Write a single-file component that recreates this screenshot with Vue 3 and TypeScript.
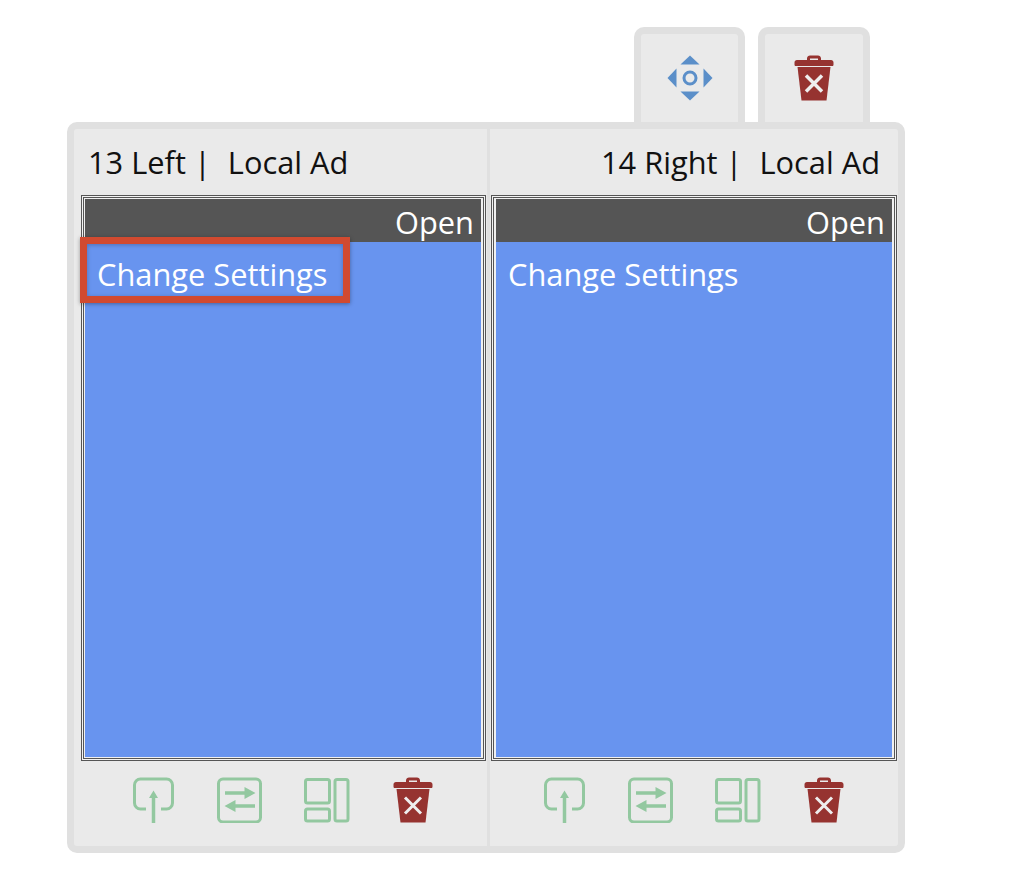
<script setup lang="ts">
interface Column {
  id: string
  label: string
  align: string
}
const columns: Column[] = [
  { id: 'left', label: '13 Left', align: 'left' },
  { id: 'right', label: '14 Right', align: 'right' },
]
</script>

<template>
  <div class="page">
    <div class="tabs">
      <button class="tab" type="button" aria-label="Move">
        <svg width="46" height="46" viewBox="0 0 46 46">
          <g fill="#5b8fc9">
            <path d="M23 .5 32.500 9.500h-19z" />
            <path d="M23 45.500 13.500 36.500h19z" />
            <path d="M.5 23 9.500 13.500v19z" />
            <path d="M45.500 23 36.500 13.500v19z" />
          </g>
          <circle cx="23" cy="23" r="6" fill="none" stroke="#5b8fc9" stroke-width="3" />
        </svg>
      </button>
      <button class="tab wide" type="button" aria-label="Delete">
        <svg width="40" height="46" viewBox="0 0 40 46">
          <path fill="#963330" d="M13 5V3.500C13 1.500 14.500.5 16 .5h8c1.500 0 3 1 3 3V5h10c1.500 0 2.500 1 2.500 2.500v2c0 1-.5 1.500-1.500 1.500H2c-1 0-1.500-.5-1.500-1.500v-2C.5 6 1.500 5 3 5zm3 0h8V3.500h-8z" />
          <path fill="#963330" d="M3.500 12h33L32.500 45.500h-25z" />
          <path d="m12 20.500 16 16m0-16-16 16" stroke="#eee" stroke-width="3.500" fill="none" />
        </svg>
      </button>
    </div>
    <div class="panel">
      <section v-for="col in columns" :key="col.id" class="col" :class="col.id">
        <header class="col-head" :class="col.align">
          <span>{{ col.label }} |</span>
          <span class="ad">Local Ad</span>
        </header>
        <div class="frame">
          <div class="frame-inner">
            <div class="content">
              <div class="open">Open</div>
              <div class="settings">Change Settings</div>
            </div>
          </div>
        </div>
        <footer class="actions">
          <svg width="42" height="46" viewBox="3 0 42 46" class="green">
            <path d="M16 32H10.500a6 6 0 0 1-6-6V8a6 6 0 0 1 6-6h26a6 6 0 0 1 6 6v18a6 6 0 0 1-6 6H31" />
            <path d="M23.500 19V46" stroke-width="3.500" />
            <path d="M23.500 13.500 28 21h-9z" class="fill" />
          </svg>
          <svg width="45" height="46" viewBox="0 0 45 46" class="green">
            <rect x="1.500" y="2" width="42" height="43" rx="4.500" />
            <path d="M8 16H30M38 29H16" stroke-width="3.500" />
            <path d="M38.500 16 27.500 10v12zM7.500 29 18.500 23v12z" class="fill" />
          </svg>
          <svg width="47" height="46" viewBox="0 0 47 46" class="green">
            <rect x="1.500" y="2.500" width="24" height="23.500" rx="2" />
            <rect x="1.500" y="32" width="24" height="12" rx="2" />
            <rect x="31" y="2.500" width="13" height="41.500" rx="2" />
          </svg>
          <svg width="40" height="46" viewBox="0 0 40 46">
            <path fill="#963330" d="M13 5V3.500C13 1.500 14.500.5 16 .5h8c1.500 0 3 1 3 3V5h10c1.500 0 2.500 1 2.500 2.500v2c0 1-.5 1.500-1.500 1.500H2c-1 0-1.500-.5-1.500-1.500v-2C.5 6 1.500 5 3 5zm3 0h8V3.500h-8z" />
            <path fill="#963330" d="M3.500 12h33L32.500 45.500h-25z" />
            <path d="m12 20.500 16 16m0-16-16 16" stroke="#eee" stroke-width="3" fill="none" />
          </svg>
        </footer>
      </section>
      <div class="highlight"></div>
    </div>
  </div>
</template>

<style>
html,
body {
  background: #fff;
}
</style>

<style scoped>
.page {
  width: 1014px;
  height: 888px;
  box-sizing: border-box;
  padding: 27px 0 0 67px;
  font-family: "Open Sans", "Liberation Sans", sans-serif;
  font-size: 30.8px;
  overflow: hidden;
}
.tabs {
  width: 838px;
  box-sizing: border-box;
  display: flex;
  justify-content: flex-end;
  gap: 13px;
  padding-right: 35px;
}
.tab {
  width: 111px;
  height: 95px;
  box-sizing: border-box;
  display: flex;
  align-items: center;
  justify-content: center;
  padding: 0;
  background: #eaeaea;
  border: 7px solid #e0e0e0;
  border-bottom: 0;
  border-radius: 10px 10px 0 0;
}
.tab.wide {
  width: 112px;
}
.panel {
  position: relative;
  width: 838px;
  height: 731px;
  box-sizing: border-box;
  display: flex;
  background: #eaeaea;
  border: 7px solid #e0e0e0;
  border-radius: 10px;
}
.col {
  display: flex;
  flex-direction: column;
  box-sizing: border-box;
}
.col.left {
  width: 413px;
  padding: 0 1px 0 7px;
}
.col.right {
  width: 411px;
  padding: 0 1px;
  border-left: 3px solid #e0e0e0;
}
.col-head {
  height: 66px;
  flex: none;
  display: flex;
  align-items: center;
  padding: 0 7px;
  color: #111;
}
.col-head.right {
  justify-content: flex-end;
  padding-right: 17px;
}
.ad {
  margin-left: 17px;
}
.frame {
  height: 566px;
  flex: none;
  box-sizing: border-box;
  border: 1px solid #555;
  padding: 1px;
  background: #f4f4f4;
}
.frame-inner {
  height: 100%;
  box-sizing: border-box;
  border: 1px solid #555;
  padding: 1px 2px;
  background: #f0f0f0;
}
.left .frame-inner {
  padding-left: 1px;
}
.content {
  height: 100%;
  background: #6894ef;
  color: #fff;
  display: flex;
  flex-direction: column;
}
.open {
  height: 43px;
  flex: none;
  background: #555;
  text-align: right;
  padding-right: 7px;
  line-height: 46px;
}
.settings {
  padding: 12px 12px 0;
  line-height: 40px;
}
.actions {
  flex: 1;
  display: flex;
  align-items: center;
  justify-content: center;
  gap: 42px;
  padding-bottom: 7px;
}
.left .actions {
  padding-right: 2px;
}
.green {
  fill: none;
  stroke: #93c8a0;
  stroke-width: 3;
}
.green .fill {
  fill: #93c8a0;
  stroke: none;
}
.highlight {
  position: absolute;
  left: 6px;
  top: 108px;
  width: 270px;
  height: 66px;
  box-sizing: border-box;
  border: 7px solid #d14a30;
  box-shadow: 0 1px 4px rgba(0, 0, 0, 0.35), inset 0 1px 4px rgba(0, 0, 0, 0.25);
}
</style>
